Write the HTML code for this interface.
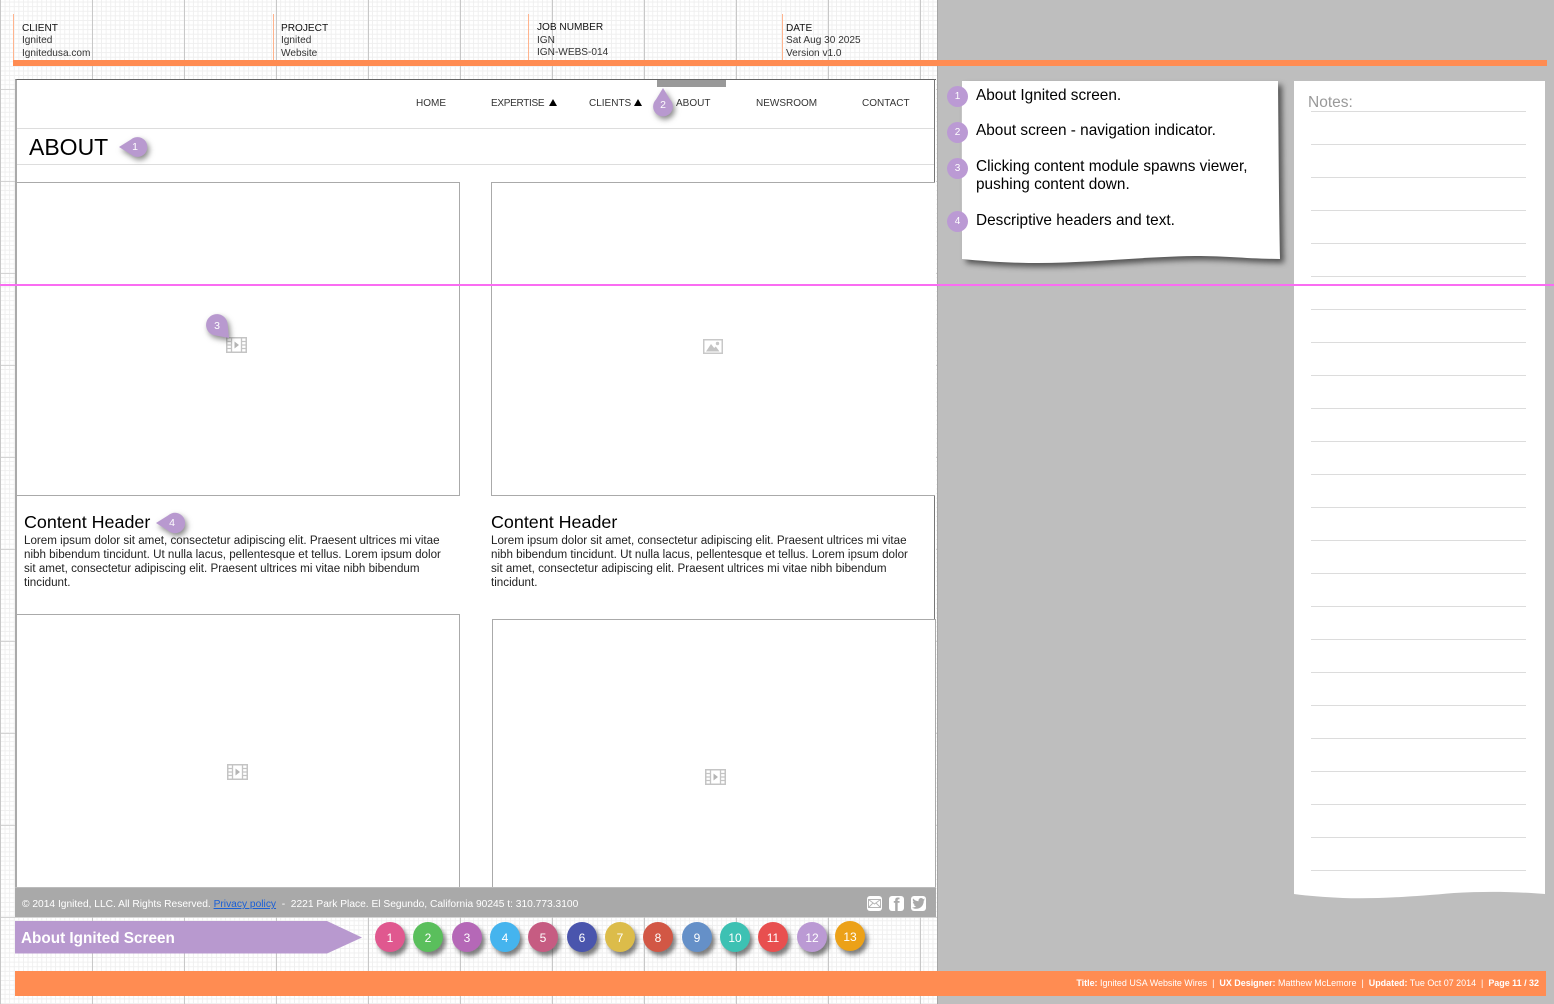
<!DOCTYPE html>
<html><head><meta charset="utf-8"><title>About Ignited Screen</title>
<style>
html,body{margin:0;padding:0}
body{position:relative;width:1554px;height:1004px;overflow:hidden;background:#fff;font-family:"Liberation Sans",sans-serif;color:#222}
.a{position:absolute}
.t{position:absolute;white-space:nowrap;line-height:14px}
#grid{left:0;top:0;width:938px;height:1004px;background-color:#fff;
background-image:
linear-gradient(90deg,#c8c8c8 1px,transparent 1px),
linear-gradient(180deg,#d4d4d4 1px,transparent 1px),
linear-gradient(90deg,#efefef 1px,transparent 1px),
linear-gradient(180deg,#efefef 1px,transparent 1px);
background-size:92px 92px,92px 92px,4.6px 4.6px,4.6px 4.6px;
background-position:0 0,0 -3px,0 0,0 -3px}
.box{position:absolute;box-sizing:border-box;background:#fff;border:1px solid #aaa}
.h{font-size:10.1px;color:#333}
.h b{font-weight:normal;color:#111}
.n{font-size:10px;color:#333;line-height:12px}
.b{font-size:11.62px;color:#222}
.ch{font-size:17.9px;color:#000;line-height:20px}
.c{font-size:15.36px;color:#000;line-height:18px}
.d{position:absolute;width:30px;height:30px;border-radius:50%;top:922px;color:#fff;font-size:12px;line-height:32px;text-align:center;box-shadow:3px 4px 4px rgba(60,60,60,.65)}
.k{position:absolute;width:21px;height:21px;border-radius:50%;left:947px;background:#bb9ad4;color:#fff;font-size:10px;line-height:22px;text-align:center}
.l{position:absolute;left:1311px;width:215px;height:1px;background:#dcdcdc}
.p{position:absolute;color:#fff;font-size:10.5px;text-align:center;width:20px;line-height:12px}
.s{position:absolute;top:896px;width:15px;height:15px;border-radius:3px;background:#fff}
svg{position:absolute;overflow:visible}
</style></head><body>
<div id="grid" class="a"></div>
<div class="a" style="left:937px;top:0;width:617px;height:1004px;background:#bebebe;border-left:1px solid #a5a5a5;box-sizing:border-box"></div>

<!-- header -->
<div class="a" style="left:13px;top:60px;width:1534px;height:5.5px;background:#ff8c52"></div>
<div class="a" style="left:13px;top:14px;width:1px;height:46px;background:#ffb48e"></div>
<div class="a" style="left:273px;top:14px;width:1px;height:46px;background:#ffb48e"></div>
<div class="a" style="left:528px;top:14px;width:1px;height:46px;background:#ffb48e"></div>
<div class="a" style="left:782px;top:14px;width:1px;height:46px;background:#ffb48e"></div>
<div class="t h" style="left:22px;top:22px"><b>CLIENT</b></div><div class="t h" style="left:22px;top:34px">Ignited</div><div class="t h" style="left:22px;top:47px">Ignitedusa.com</div>
<div class="t h" style="left:281px;top:22px"><b>PROJECT</b></div><div class="t h" style="left:281px;top:34px">Ignited</div><div class="t h" style="left:281px;top:47px">Website</div>
<div class="t h" style="left:537px;top:21px"><b>JOB NUMBER</b></div><div class="t h" style="left:537px;top:34px">IGN</div><div class="t h" style="left:537px;top:46px">IGN-WEBS-014</div>
<div class="t h" style="left:786px;top:22px"><b>DATE</b></div><div class="t h" style="left:786px;top:34px">Sat Aug 30 2025</div><div class="t h" style="left:786px;top:47px">Version v1.0</div>

<!-- page frame -->
<div class="a" style="left:15px;top:79px;width:921px;height:808px;background:#fff;box-sizing:border-box;border-top:1px solid #666;border-left:2px solid #aaa"></div>
<div class="a" style="left:934px;top:79px;width:1px;height:541px;background:#777"></div>
<div class="a" style="left:17px;top:128px;width:917px;height:1px;background:#ddd"></div>
<div class="a" style="left:17px;top:164px;width:917px;height:1px;background:#ddd"></div>
<div class="a" style="left:657px;top:80px;width:69px;height:7px;background:#999"></div>

<div class="t n" style="left:416px;top:98px">HOME</div>
<div class="t n" style="left:491px;top:98px;letter-spacing:-.3px">EXPERTISE</div>
<svg style="left:549px;top:99px" width="8" height="7"><path d="M4 0L8 7H0Z" fill="#000"/></svg>
<div class="t n" style="left:589px;top:98px">CLIENTS</div>
<svg style="left:634px;top:99px" width="8" height="7"><path d="M4 0L8 7H0Z" fill="#000"/></svg>
<div class="t n" style="left:676px;top:98px">ABOUT</div>
<div class="t n" style="left:756px;top:98px">NEWSROOM</div>
<div class="t n" style="left:862px;top:98px">CONTACT</div>

<div class="t" style="left:29px;top:132px;font-size:23px;line-height:30px;color:#000">ABOUT</div>

<!-- content boxes -->
<div class="box" style="left:16px;top:182px;width:444px;height:314px"></div>
<div class="box" style="left:491px;top:182px;width:444px;height:314px;border-right:none"></div>
<div class="box" style="left:16px;top:614px;width:444px;height:273px;border-bottom:none"></div>
<div class="box" style="left:492px;top:619px;width:444px;height:268px;border-bottom:none"></div>

<div class="t ch" style="left:24px;top:512px">Content Header</div>
<div class="t b" style="left:24px;top:534px">Lorem ipsum dolor sit amet, consectetur adipiscing elit. Praesent ultrices mi vitae</div>
<div class="t b" style="left:24px;top:548px">nibh bibendum tincidunt. Ut nulla lacus, pellentesque et tellus. Lorem ipsum dolor</div>
<div class="t b" style="left:24px;top:562px">sit amet, consectetur adipiscing elit. Praesent ultrices mi vitae nibh bibendum</div>
<div class="t b" style="left:24px;top:576px">tincidunt.</div>
<div class="t ch" style="left:491px;top:512px">Content Header</div>
<div class="t b" style="left:491px;top:534px">Lorem ipsum dolor sit amet, consectetur adipiscing elit. Praesent ultrices mi vitae</div>
<div class="t b" style="left:491px;top:548px">nibh bibendum tincidunt. Ut nulla lacus, pellentesque et tellus. Lorem ipsum dolor</div>
<div class="t b" style="left:491px;top:562px">sit amet, consectetur adipiscing elit. Praesent ultrices mi vitae nibh bibendum</div>
<div class="t b" style="left:491px;top:576px">tincidunt.</div>

<!-- media icons -->
<svg style="left:226px;top:337px" width="21" height="16" viewBox="0 0 21 16"><use href="#film"/></svg>
<svg style="left:227px;top:764px" width="21" height="16" viewBox="0 0 21 16"><use href="#film"/></svg>
<svg style="left:705px;top:769px" width="21" height="16" viewBox="0 0 21 16"><use href="#film"/></svg>
<svg width="0" height="0"><defs><g id="film"><rect x=".75" y=".75" width="19.5" height="14.5" fill="#fff" stroke="#c4c4c4" stroke-width="1.5"/><path d="M5.5 1v14M15.5 1v14M1 4.5h4.5M1 8h4.5M1 11.5h4.5M15.5 4.5h4.5M15.5 8h4.5M15.5 11.5h4.5" stroke="#c4c4c4" stroke-width="1.3" fill="none"/><path d="M8.5 4.5L13 8l-4.5 3.5z" fill="#b5b5b5"/></g></defs></svg>
<svg style="left:703px;top:339px" width="20" height="15" viewBox="0 0 20 15"><rect x=".75" y=".75" width="18.5" height="13.5" fill="#fff" stroke="#c8c8c8" stroke-width="1.5"/><path d="M3 12.5L8 5l3.2 4 1.6-1.5 3.7 5z" fill="#c4c4c4"/><circle cx="14.5" cy="4.5" r="1.7" fill="#c8c8c8"/></svg>

<!-- footer -->
<div class="a" style="left:15px;top:887px;width:921px;height:30px;background:#a9a9a9;border-top:1px solid #bbb;box-sizing:border-box"></div>
<div class="t" style="left:22px;top:898px;font-size:10.23px;color:#fff">© 2014 Ignited, LLC. All Rights Reserved. <span style="color:#1a5fd6;text-decoration:underline">Privacy policy</span> &nbsp;-&nbsp; 2221 Park Place. El Segundo, California 90245 t: 310.773.3100</div>
<div class="s" style="left:867px"><svg style="left:1px;top:3px" width="13" height="9" viewBox="0 0 13 9"><rect x=".5" y=".5" width="12" height="8" fill="none" stroke="#b5b5b5"/><path d="M.5.5l6 4.500 6-4.500M.5 8.500l4.500-4.500M12.500 8.500l-4.500-4.500" fill="none" stroke="#b5b5b5" stroke-width=".9"/></svg></div>
<div class="s" style="left:889px;color:#a9a9a9;font:bold 18px/19px 'Liberation Sans',sans-serif;text-align:center">f</div>
<div class="s" style="left:911px"><svg style="left:1px;top:2px" width="13" height="11" viewBox="0 0 13 11"><path d="M13 1.500c-.5.200-1 .4-1.500.4.500-.3 1-.8 1.200-1.400-.5.300-1 .5-1.600.6C10.600.4 9.900 0 9.100 0 7.600 0 6.500 1.200 6.500 2.700c0 .2 0 .4.100.6C4.400 3.200 2.500 2.100 1.200.5.900.9.800 1.400.8 1.900c0 .9.500 1.700 1.200 2.200-.4 0-.8-.1-1.200-.3 0 1.300.9 2.400 2.100 2.600-.4.100-.8.100-1.200 0 .3 1.100 1.300 1.800 2.500 1.900C3.200 9.200 1.700 9.700 0 9.500 1.200 10.300 2.600 10.800 4.100 10.800c4.900 0 7.600-4.100 7.600-7.600v-.4c.5-.4 1-.8 1.300-1.300z" fill="#a9a9a9"/></svg></div>

<!-- section arrow -->
<svg style="left:15px;top:921px" width="348" height="33"><path d="M0 0H312L347 16.500 312 32.500H0Z" fill="#b899cf"/></svg>
<div class="t" style="left:21px;top:929px;font-size:15.3px;line-height:20px;font-weight:bold;color:#fff">About Ignited Screen</div>

<!-- nav dots -->
<div class="d" style="left:375px;background:#e0588f">1</div>
<div class="d" style="left:413px;background:#5abf5c">2</div>
<div class="d" style="left:452px;background:#b568b7">3</div>
<div class="d" style="left:490px;background:#45b4ee">4</div>
<div class="d" style="left:528px;background:#c65c82">5</div>
<div class="d" style="left:567px;background:#4a55ad">6</div>
<div class="d" style="left:605px;background:#dcbc4a">7</div>
<div class="d" style="left:643px;background:#d25745">8</div>
<div class="d" style="left:682px;background:#6590c8">9</div>
<div class="d" style="left:720px;background:#3dc1b3">10</div>
<div class="d" style="left:758px;background:#e84f4f">11</div>
<div class="d" style="left:797px;background:#bb9ad4">12</div>
<div class="d" style="left:835px;top:921px;background:#eca118">13</div>

<!-- bottom bar -->
<div class="a" style="left:15px;top:971px;width:1531px;height:25px;background:#ff8c52"></div>
<div class="t" style="right:15px;top:976px;font-size:8.95px;color:#fff"><b>Title:</b> Ignited USA Website Wires &nbsp;|&nbsp; <b>UX Designer:</b> Matthew McLemore &nbsp;|&nbsp; <b>Updated:</b> Tue Oct 07 2014 &nbsp;|&nbsp; <b>Page 11 / 32</b></div>

<!-- callout sheet -->
<svg style="left:962px;top:81px;filter:drop-shadow(4px 4px 3px rgba(50,50,50,.75))" width="320" height="185"><path d="M0 0H316C316.500 60 317 125 318 178C290 178 265 175 233 175C175 176 125 182 76 182C45 182 20 180 0 178C0 120 -.5 60 0 0Z" fill="#fff"/></svg>
<div class="t c" style="left:976px;top:87px">About Ignited screen.</div>
<div class="t c" style="left:976px;top:122px">About screen - navigation indicator.</div>
<div class="t c" style="left:976px;top:158px">Clicking content module spawns viewer,</div>
<div class="t c" style="left:976px;top:176px">pushing content down.</div>
<div class="t c" style="left:976px;top:212px">Descriptive headers and text.</div>
<div class="k" style="top:86px">1</div>
<div class="k" style="top:122px">2</div>
<div class="k" style="top:158px">3</div>
<div class="k" style="top:211px">4</div>

<!-- notes -->
<svg style="left:1294px;top:81px" width="251" height="818"><path d="M0 0H251V813C225 811 195 810 160 812C115 816 80 818 49 817C30 816 15 815 0 813Z" fill="#fff"/></svg>
<div class="t" style="left:1308px;top:94px;font-size:15.5px;line-height:18px;color:#999">Notes:</div>
<div class="l" style="top:111px"></div><div class="l" style="top:144px"></div><div class="l" style="top:177px"></div><div class="l" style="top:210px"></div><div class="l" style="top:243px"></div><div class="l" style="top:276px"></div><div class="l" style="top:309px"></div><div class="l" style="top:342px"></div><div class="l" style="top:375px"></div><div class="l" style="top:408px"></div><div class="l" style="top:441px"></div><div class="l" style="top:474px"></div><div class="l" style="top:507px"></div><div class="l" style="top:540px"></div><div class="l" style="top:573px"></div><div class="l" style="top:606px"></div><div class="l" style="top:639px"></div><div class="l" style="top:672px"></div><div class="l" style="top:705px"></div><div class="l" style="top:738px"></div><div class="l" style="top:771px"></div><div class="l" style="top:804px"></div><div class="l" style="top:837px"></div><div class="l" style="top:870px"></div>

<!-- pins -->
<svg style="left:0;top:0;filter:drop-shadow(2px 3px 3px rgba(40,40,40,.55))" width="1" height="1">
<path d="M119 147L131 139.500A9.900 9.900 0 1 1 131 154.500Z" fill="#b899cf"/>
<path d="M663 88L670 99.500A9.900 9.900 0 1 1 656 99.500Z" fill="#b899cf"/>
<path d="M229 338L213 335A10.800 10.800 0 1 1 227.500 323Z" fill="#b899cf"/>
<path d="M156 523L168 515.500A10.200 10.200 0 1 1 168 530.500Z" fill="#b899cf"/>
</svg>
<div class="p" style="left:125px;top:141px">1</div>
<div class="p" style="left:653px;top:99px">2</div>
<div class="p" style="left:207px;top:320px">3</div>
<div class="p" style="left:162px;top:517px">4</div>

<!-- guide -->
<div class="a" style="left:0;top:284px;width:1554px;height:2px;background:rgb(250,108,242)"></div>
</body></html>
